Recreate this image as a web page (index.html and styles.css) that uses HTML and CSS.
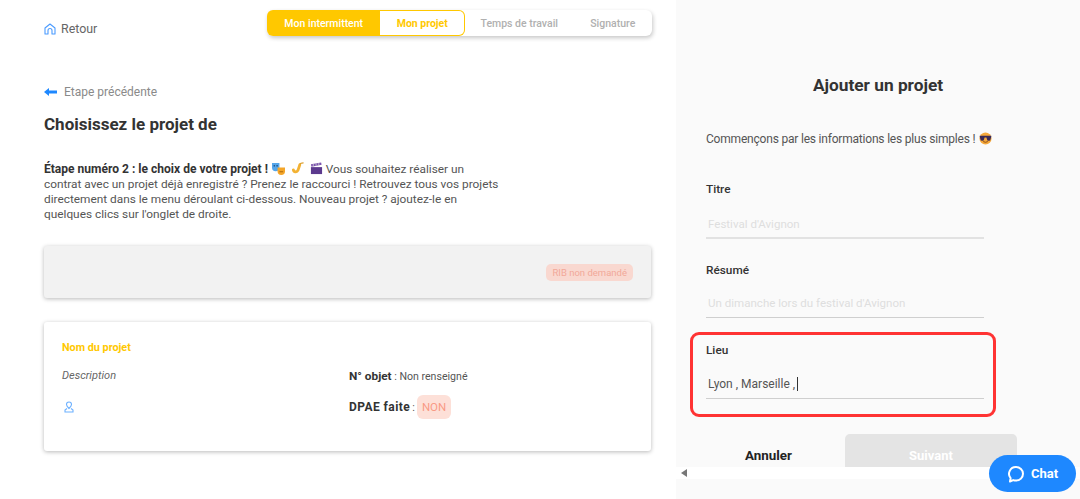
FILE: index.html
```html
<!DOCTYPE html>
<html lang="fr">
<head>
<meta charset="utf-8">
<title>Ajouter un projet</title>
<link rel="stylesheet" href="styles.css">
</head>
<body>
<div class="page">
  <main class="left">
    <header class="top">
      <a class="back-home">
        <svg class="ico-home" viewBox="0 0 12 12"><path d="M1 5 6 1l5 4v6H8V7.500a2 2 0 0 0-4 0V11H1z" fill="none" stroke="#4b9bff" stroke-width="1.100" stroke-linejoin="round"/></svg>
        <span>Retour</span>
      </a>
      <nav class="steps">
        <span class="step step-done">Mon intermittent</span>
        <span class="step step-active">Mon projet</span>
        <span class="step step-todo step-w">Temps de travail</span>
        <span class="step step-todo step-s">Signature</span>
      </nav>
    </header>
    <a class="prev">
      <svg class="ico-arrow" viewBox="0 0 13 10"><path d="M0 5 5 1v2.600h8v2.800H5V9z" fill="#1e88ff"/></svg>
      <span>Etape précédente</span>
    </a>
    <h1 class="title">Choisissez le projet de</h1>
    <p class="intro"><b>Étape numéro 2 : le choix de votre projet !</b>
      <svg class="emo" viewBox="0 0 14 14"><path d="M0 1h8v5a4 4 0 0 1-8 0z" fill="#55a6ea"/><circle cx="2.500" cy="4" r=".9" fill="#1b4f86"/><circle cx="5.500" cy="4" r=".9" fill="#1b4f86"/><path d="M6 6h8v4a4 4 0 0 1-8 0z" fill="#f4a62a"/><path d="M8 10.500h4" stroke="#a8650a" fill="none"/></svg>
      <svg class="emo emo-gap" viewBox="0 0 14 14"><path d="M9.500 3 7.500 9a2.600 2.600 0 0 1-5-.6" fill="none" stroke="#f3b233" stroke-width="3" stroke-linecap="round"/><path d="M9.500 2.500C10 1.300 11.500 1 13.500 1" fill="none" stroke="#d99a24" stroke-width="1.200"/></svg>
      <svg class="emo emo-gap" viewBox="0 0 14 14"><path d="M1 5.500h12V13H1z" fill="#5c3a8e"/><path d="M1 2.500 12 .5l.5 2.500-11 2z" fill="#7a52ad"/><path d="M3.500 2v2.500M6.500 1.500v2.500M9.500 1v2.500" stroke="#ddd" stroke-width=".8" fill="none"/></svg>
      Vous souhaitez réaliser un<br>contrat avec un projet déjà enregistré ? Prenez le raccourci ! Retrouvez tous vos projets<br>directement dans le menu déroulant ci-dessous. Nouveau projet ? ajoutez-le en<br>quelques clics sur l'onglet de droite.</p>
    <section class="card card-grey">
      <span class="rib">RIB non demandé</span>
    </section>
    <section class="card card-project">
      <h2 class="project-name">Nom du projet</h2>
      <div class="project-grid">
        <em class="desc">Description</em>
        <div class="meta"><b>N° objet</b> : Non renseigné</div>
        <svg class="ico-pin" viewBox="0 0 10 12"><path d="M5 7.500C3.500 6 2.500 5 2.500 3.500a2.500 2.500 0 0 1 5 0C7.500 5 6.500 6 5 7.500z" fill="none" stroke="#6db1ff" stroke-width="1.100"/><path d="M3 7.500 1 9v2h8V9L7 7.500" fill="none" stroke="#6db1ff" stroke-width="1.100"/></svg>
        <div class="meta meta-dpae"><b>DPAE faite</b> : <span class="non">NON</span></div>
      </div>
    </section>
  </main>
  <aside class="right">
    <h2 class="add-title">Ajouter un projet</h2>
    <p class="add-intro">Commençons par les informations les plus simples !
      <svg class="emo-cool" viewBox="0 0 14 14"><circle cx="7" cy="7" r="6.500" fill="#f6a93b"/><path d="M.8 4h12.400v1.500L12.500 7.500a2 2 0 0 1-4 0L8 6H6l-.5 1.500a2 2 0 0 1-4 0L.8 5.500z" fill="#3a2a55"/><path d="M4.500 10.300q2.500 1.500 5 0" fill="none" stroke="#8a4a10"/></svg></p>
    <div class="field field-titre">
      <label class="label">Titre</label>
      <div class="input ph">Festival d'Avignon</div>
    </div>
    <div class="field field-resume">
      <label class="label">Résumé</label>
      <div class="input ph">Un dimanche lors du festival d'Avignon</div>
    </div>
    <div class="field field-lieu">
      <label class="label">Lieu</label>
      <div class="input val">Lyon , Marseille ,<i class="caret"></i></div>
      <div class="highlight"></div>
    </div>
    <div class="actions">
      <span class="cancel">Annuler</span>
      <span class="next">Suivant</span>
    </div>
    <div class="hscroll"><i class="hscroll-arrow"></i></div>
  </aside>
</div>
<button class="chat">
  <svg class="ico-chat" viewBox="0 0 18 18"><path d="M9 2a7 6.800 0 0 1 0 13.600c-1 0-2-.2-2.800-.5L3 16.500l.6-3.400A6.800 6.800 0 0 1 9 2z" fill="none" stroke="#fff" stroke-width="2" stroke-linejoin="round"/></svg>
  <span>Chat</span>
</button>
</body>
</html>
```
FILE: styles.css
```css
* { box-sizing: border-box; }
html, body { margin: 0; height: 499px; overflow: hidden; background: #fff; }
body { font-family: Roboto, "Liberation Sans", sans-serif; color: #555; }
.page { display: flex; height: 499px; }
.left { width: 676px; padding: 10px 24px 0 44px; }
.top { display: flex; align-items: flex-start; height: 36px; }
.back-home { display: flex; align-items: center; gap: 5px; font-size: 12.400px; color: #666; margin-top: 11px; }
.ico-home { width: 12px; height: 12px; }
.steps { margin-left: 170px; display: flex; width: 385px; height: 26px; border-radius: 6px; background: #fff; box-shadow: 1px 2px 4px rgba(0,0,0,.22); font-size: 10.500px; font-weight: 500; }
.step { display: flex; align-items: center; justify-content: center; height: 26px; }
.step-done { width: 113px; background: #ffc800; color: #fff; border-radius: 6px 0 0 6px; }
.step-active { width: 85px; border: 1px solid #ffc800; border-left: 0; border-radius: 0 6px 6px 0; color: #ffc800; font-weight: 700; }
.step-todo { color: #b0b0b0; }
.step-w { width: 108px; }
.step-s { width: 79px; }
.prev { display: flex; align-items: center; gap: 7px; margin-top: 39px; font-size: 12px; color: #8a8a8a; }
.ico-arrow { width: 13px; height: 10px; }
.title { margin: 15px 0 0; font-size: 17px; line-height: 20px; font-weight: 700; color: #333; }
.intro { margin: 28px 0 0; font-size: 11.830px; line-height: 15px; color: #555; white-space: nowrap; }
.intro b { color: #333; font-weight: 700; font-size: 12.050px; }
.emo { width: 13px; height: 13px; vertical-align: -2px; margin-left: 1px; }
.emo-gap { margin-left: 3px; }
.card { border-radius: 3px; box-shadow: 0 1px 4px rgba(0,0,0,.28); width: 607px; }
.card-grey { display: flex; justify-content: flex-end; align-items: center; height: 52px; margin-top: 24px; background: #f2f2f2; padding-right: 18px; }
.rib { display: flex; align-items: center; height: 17px; padding: 0 6px; border-radius: 5px; background: #f9d8d0; color: #f2a899; font-size: 9.500px; }
.card-project { height: 129px; margin-top: 24px; padding: 20px 18px 0; background: #fff; }
.project-name { margin: 0; font-size: 10.800px; line-height: 12px; font-weight: 700; color: #ffc800; }
.project-grid { display: grid; grid-template-columns: 287px 1fr; grid-template-rows: 21px 42px; margin-top: 11px; align-items: center; }
.desc { font-size: 11px; color: #666; }
.meta { font-size: 10.600px; color: #555; }
.meta b { color: #333; font-size: 11.800px; }
.ico-pin { width: 10px; height: 12px; margin-left: 2px; }
.meta-dpae { display: flex; align-items: center; gap: 2px; }
.meta-dpae b { font-size: 12px; letter-spacing: .45px; }
.non { display: flex; align-items: center; height: 24px; padding: 0 5px; background: #fde0d8; border-radius: 6px; color: #f99a85; font-size: 11.500px; }
.right { position: relative; flex: 1; background: #fafafa; padding: 0 30px; }
.add-title { margin: 75px 0 0; text-align: center; font-size: 17.300px; line-height: 20px; font-weight: 700; color: #333; }
.add-intro { margin: 37px 0 0; font-size: 12px; letter-spacing: -.2px; line-height: 15px; color: #555; }
.emo-cool { width: 13px; height: 13px; vertical-align: -2px; margin-left: 1px; }
.field { position: relative; width: 278px; }
.label { display: block; font-size: 11.800px; line-height: 14px; font-weight: 500; color: #333; }
.input { margin-top: 6px; border-bottom: 1px solid #cfcfcf; padding: 13px 2px 0; font-size: 11.550px; line-height: 16px; }
.field-titre { margin-top: 35px; }
.field-titre .input { height: 37px; padding-top: 14px; border-bottom: 2px solid #e2e2e2; }
.field-resume { margin-top: 24px; }
.field-resume .input { height: 35px; padding-top: 12px; }
.field-lieu { margin-top: 25px; }
.field-lieu .input { height: 36px; font-size: 12px; }
.ph { color: #dedede; }
.val { color: #555; display: flex; align-items: flex-start; }
.caret { display: inline-block; width: 1px; height: 14px; margin: 1px 0 0 2px; background: #333; }
.highlight { position: absolute; left: -16px; top: -11px; width: 306px; height: 85px; border: 3px solid #f33; border-radius: 9px; }
.actions { display: flex; align-items: flex-start; margin-top: 35px; height: 33px; }
.cancel { width: 139px; padding: 14px 14px 0 0; text-align: center; font-size: 13.400px; font-weight: 700; color: #222; }
.next { display: flex; justify-content: center; padding-top: 14px; width: 172px; height: 33px; font-size: 13px; font-weight: 700; color: #fff; background: #e4e4e4; border-radius: 5px 5px 0 0; }
.hscroll { position: absolute; left: 0; top: 467px; width: 100%; height: 12px; background: #fff; display: flex; align-items: center; padding-left: 5px; }
.hscroll-arrow { width: 0; height: 0; border: 4px solid transparent; border-right: 6px solid #777; border-left: 0; }
.chat { position: absolute; left: 989px; top: 455px; display: flex; align-items: center; justify-content: center; gap: 6px; width: 87px; height: 37px; padding: 0; border: 0; border-radius: 19px; background: #1e88ff; color: #fff; font: 700 13px Roboto, sans-serif; }
.ico-chat { width: 18px; height: 18px; }
```
